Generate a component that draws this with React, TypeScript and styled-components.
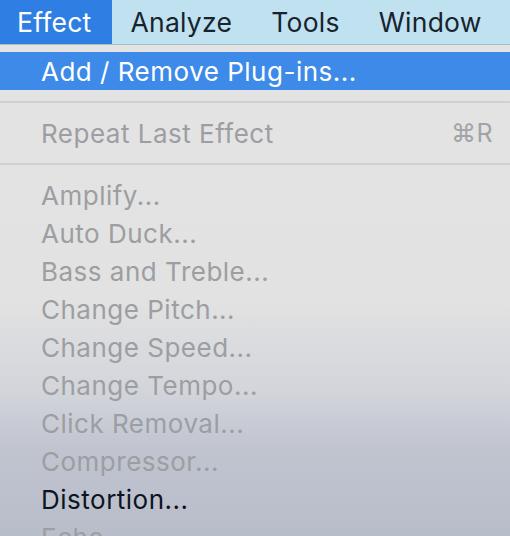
import { createGlobalStyle } from 'styled-components'
import styled from 'styled-components'

const GlobalStyle = createGlobalStyle`
  html, body {
    margin: 0;
    padding: 0;
  }
  body {
    width: 510px;
    height: 536px;
    overflow: hidden;
    font-family: Inter, "Noto Sans", "DejaVu Sans", sans-serif;
    -webkit-font-smoothing: antialiased;
  }
`

const Page = styled.div`
  width: 510px;
  height: 536px;
  display: flex;
  flex-direction: column;
  overflow: hidden;
  background: linear-gradient(
    #e4e4e4 0px,
    #e2e2e2 300px,
    #d3d5db 390px,
    #c0c4cf 450px,
    #b8bdca 536px
  );
`

const MenuBar = styled.div`
  height: 44px;
  display: flex;
  align-items: stretch;
  background: #c0e1f0;
  border-bottom: 1px solid #a9bcc6;
  flex-shrink: 0;
`

const BarItem = styled.div<{ $active?: boolean }>`
  display: flex;
  align-items: center;
  padding: 0 20px 0 19px;
  font-size: 26.5px;
  letter-spacing: 0.25px;
  color: ${p => (p.$active ? '#ffffff' : '#17232d')};
  background: ${p => (p.$active ? '#2e7ee3' : 'transparent')};

  &:first-child {
    padding-left: 17px;
  }
`

const Menu = styled.div`
  display: flex;
  flex-direction: column;
  padding-top: 7px;
`

const Item = styled.div<{ $selected?: boolean; $enabled?: boolean }>`
  height: 38px;
  flex-shrink: 0;
  display: flex;
  align-items: center;
  justify-content: space-between;
  padding: 0 17px 0 41px;
  font-size: 26px;
  letter-spacing: 0.5px;
  white-space: nowrap;
  color: ${p => (p.$selected ? '#ffffff' : p.$enabled ? '#0d1420' : '#9c9ea2')};
  background: ${p => (p.$selected ? '#3e8ae8' : 'transparent')};
`

const Shortcut = styled.span`
  font-size: 25px;
  color: #a2a3a6;
`

const Separator = styled.div`
  height: 24px;
  flex-shrink: 0;
  display: flex;
  align-items: center;

  &::after {
    content: '';
    flex: 1;
    height: 2px;
    background: #d0d0d1;
  }
`

const effects = [
  'Amplify...',
  'Auto Duck...',
  'Bass and Treble...',
  'Change Pitch...',
  'Change Speed...',
  'Change Tempo...',
  'Click Removal...',
  'Compressor...',
  'Distortion...',
  'Echo...',
]

const App = () => {
  return (
    <Page>
      <GlobalStyle />
      <MenuBar>
        <BarItem $active>Effect</BarItem>
        <BarItem>Analyze</BarItem>
        <BarItem>Tools</BarItem>
        <BarItem>Window</BarItem>
      </MenuBar>
      <Menu>
        <Item $selected>Add / Remove Plug-ins...</Item>
        <Separator />
        <Item>
          <span>Repeat Last Effect</span>
          <Shortcut>⌘R</Shortcut>
        </Item>
        <Separator />
        {effects.map(name => (
          <Item key={name} $enabled={name === 'Distortion...'}>
            {name}
          </Item>
        ))}
      </Menu>
    </Page>
  )
}

export default App
